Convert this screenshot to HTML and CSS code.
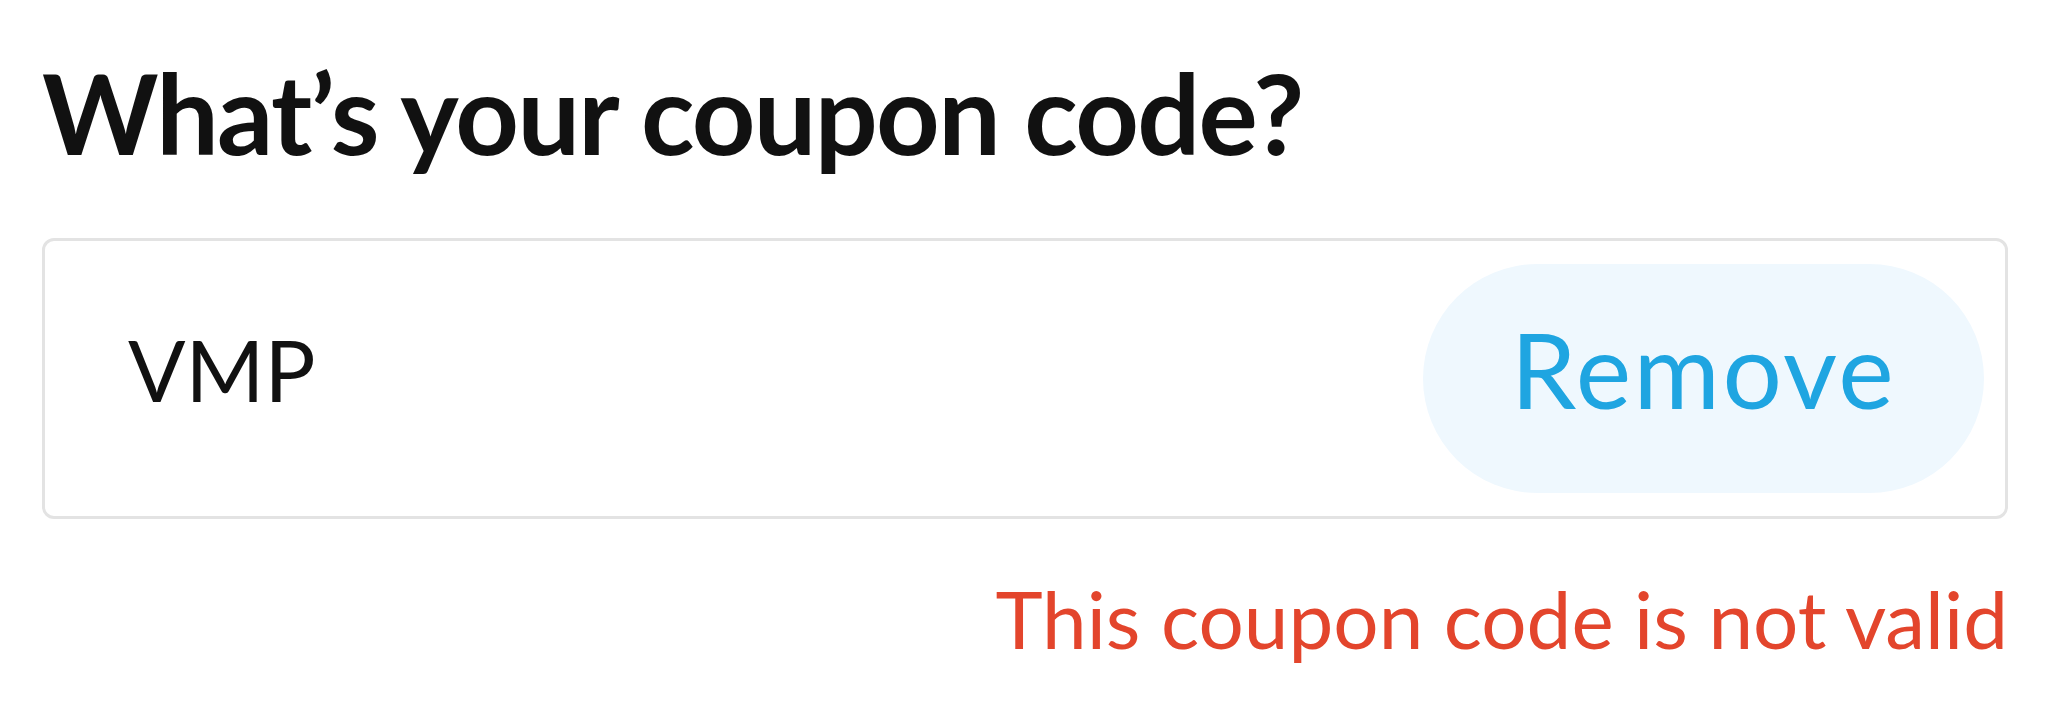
FILE: index.html
```html
<!DOCTYPE html>
<html>
<head>
<meta charset="utf-8">
<link rel="stylesheet" href="styles.css">
</head>
<body>
<div class="page">
  <h1 class="title">What’s your coupon code?</h1>
  <div class="field">
    <span class="code">VMP</span>
    <button class="remove">Remove</button>
  </div>
  <p class="error">This coupon code is not valid</p>
</div>
</body>
</html>
```
FILE: styles.css
```css
html, body {
  margin: 0;
  padding: 0;
  background: #ffffff;
}
.page {
  width: 1966px;
  padding: 0 40px 0 42px;
  font-family: "Lato", "Liberation Sans", sans-serif;
}
.title {
  margin: 0;
  padding-top: 47px;
  font-size: 111px;
  line-height: 130px;
  font-weight: 700;
  color: #111111;
  letter-spacing: -1.7px;
}
.field {
  box-sizing: border-box;
  margin-top: 61px;
  height: 281px;
  border: 3px solid #e3e3e3;
  border-radius: 12px;
  display: flex;
  align-items: center;
  justify-content: space-between;
  padding: 0 21px 0 83px;
}
.code {
  font-size: 85px;
  color: #111111;
  padding-bottom: 20px;
}
.remove {
  width: 561px;
  height: 229px;
  border: none;
  border-radius: 115px;
  background: #eff8fe;
  color: #1fa5e1;
  font-family: inherit;
  font-size: 105px;
  letter-spacing: 2.5px;
  padding: 0 0 22px 0;
}
.error {
  margin: 51px 0 0 0;
  text-align: right;
  font-size: 80px;
  color: #e3452c;
}
```
